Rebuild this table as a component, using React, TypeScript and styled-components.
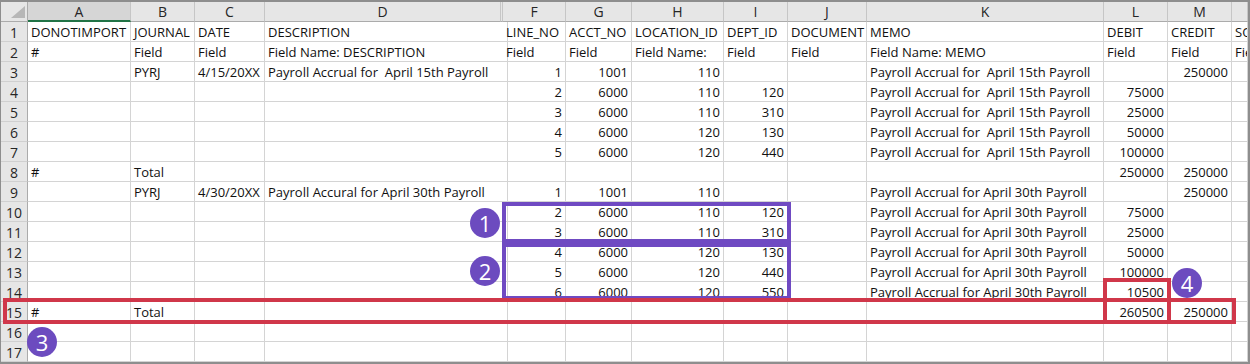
import styled, { createGlobalStyle } from 'styled-components';

type Value = string | number | null;

const GlobalStyle = createGlobalStyle`
  html, body {
    margin: 0;
    padding: 0;
    background: #ffffff;
  }
  body {
    font-family: "Open Sans", "Liberation Sans", sans-serif;
  }
`;

// row header, A, B, C, D, E (hidden), F .. M, then the column cut off at the edge
const COLS = '27px 103px 64px 70px 236px 2px 63px 66px 92px 64px 79px 237px 64px 64px 1fr';
const LETTERS = ['A', 'B', 'C', 'D', '', 'F', 'G', 'H', 'I', 'J', 'K', 'L', 'M', ''];

const MEMO15 = 'Payroll Accrual for  April 15th Payroll';
const MEMO30 = 'Payroll Accrual for April 30th Payroll';

const ROWS: Value[][] = [
  ['DONOTIMPORT', 'JOURNAL', 'DATE', 'DESCRIPTION', null, 'LINE_NO', 'ACCT_NO', 'LOCATION_ID', 'DEPT_ID', 'DOCUMENT', 'MEMO', 'DEBIT', 'CREDIT', 'SOURCE_DOC'],
  ['#', 'Field', 'Field', 'Field Name: DESCRIPTION', null, 'Field', 'Field', 'Field Name:', 'Field', 'Field', 'Field Name: MEMO', 'Field', 'Field', 'Field'],
  [null, 'PYRJ', '4/15/20XX', MEMO15, null, 1, 1001, 110, null, null, MEMO15, null, 250000, null],
  [null, null, null, null, null, 2, 6000, 110, 120, null, MEMO15, 75000, null, null],
  [null, null, null, null, null, 3, 6000, 110, 310, null, MEMO15, 25000, null, null],
  [null, null, null, null, null, 4, 6000, 120, 130, null, MEMO15, 50000, null, null],
  [null, null, null, null, null, 5, 6000, 120, 440, null, MEMO15, 100000, null, null],
  ['#', 'Total', null, null, null, null, null, null, null, null, null, 250000, 250000, null],
  [null, 'PYRJ', '4/30/20XX', 'Payroll Accural for April 30th Payroll', null, 1, 1001, 110, null, null, MEMO30, null, 250000, null],
  [null, null, null, null, null, 2, 6000, 110, 120, null, MEMO30, 75000, null, null],
  [null, null, null, null, null, 3, 6000, 110, 310, null, MEMO30, 25000, null, null],
  [null, null, null, null, null, 4, 6000, 120, 130, null, MEMO30, 50000, null, null],
  [null, null, null, null, null, 5, 6000, 120, 440, null, MEMO30, 100000, null, null],
  [null, null, null, null, null, 6, 6000, 120, 550, null, MEMO30, 10500, null, null],
  ['#', 'Total', null, null, null, null, null, null, null, null, null, 260500, 250000, null],
  [null, null, null, null, null, null, null, null, null, null, null, null, null, null],
  [null, null, null, null, null, null, null, null, null, null, null, null, null, null],
];

const Stage = styled.div`
  position: relative;
  width: 1250px;
  height: 364px;
  overflow: hidden;
`;

const Sheet = styled.div`
  box-sizing: border-box;
  width: 1250px;
  height: 364px;
  border-style: solid;
  border-color: #8e8e8e;
  border-width: 2px 2px 2px 1px;
  overflow: hidden;
  background: #ffffff;
`;

const Row = styled.div`
  display: grid;
  grid-template-columns: ${COLS};
  height: 20px;
`;

const ColHead = styled.div<{ $selected?: boolean }>`
  box-sizing: border-box;
  height: 20px;
  background: ${(p) => (p.$selected ? '#d6d6d6' : '#e6e6e6')};
  border-right: 1px solid #c6c6c6;
  border-bottom: ${(p) => (p.$selected ? '2px solid #217346' : '1px solid #ababab')};
  color: #262626;
  font-size: 14px;
  line-height: 19px;
  text-align: center;
  overflow: hidden;
`;

const Corner = styled.div`
  box-sizing: border-box;
  height: 20px;
  background: #e6e6e6;
  border-right: 1px solid #ababab;
  border-bottom: 1px solid #ababab;
  display: flex;
  align-items: flex-end;
  justify-content: flex-end;
  padding: 0 2px 3px 0;
`;

const RowHead = styled.div`
  box-sizing: border-box;
  height: 20px;
  background: #e6e6e6;
  border-right: 1px solid #ababab;
  border-bottom: 1px solid #d0d0d0;
  color: #262626;
  font-size: 14px;
  line-height: 21px;
  text-align: center;
`;

const Cell = styled.div<{ $num?: boolean; $open?: boolean }>`
  box-sizing: border-box;
  height: 20px;
  border-right: ${(p) => (p.$open ? 'none' : '1px solid #d4d4d4')};
  border-bottom: 1px solid #d4d4d4;
  padding: 0 3px;
  color: #111111;
  font-size: 13px;
  line-height: 21px;
  text-align: ${(p) => (p.$num ? 'right' : 'left')};
  white-space: pre;
  overflow: hidden;
`;

// callout outlines drawn over the grid
const Outline = styled.div<{ $x: number; $y: number; $w: number; $h: number; $color: string }>`
  position: absolute;
  box-sizing: border-box;
  left: ${(p) => p.$x}px;
  top: ${(p) => p.$y}px;
  width: ${(p) => p.$w}px;
  height: ${(p) => p.$h}px;
  border: 4px solid ${(p) => p.$color};
  pointer-events: none;
`;

// numbered callout badges
const Marker = styled.div<{ $cx: number; $cy: number }>`
  position: absolute;
  left: ${(p) => p.$cx - 15}px;
  top: ${(p) => p.$cy - 15}px;
  width: 30px;
  height: 30px;
  border-radius: 50%;
  background: #6c4bbf;
  color: #ffffff;
  font-family: "Open Sans", "Liberation Sans", sans-serif;
  font-size: 22px;
  font-weight: 500;
  display: flex;
  align-items: center;
  justify-content: center;
`;

const PURPLE = '#6f4ac2';
const RED = '#d0374a';

function SelectAll() {
  return (
    <svg width="14" height="12" viewBox="0 0 14 12">
      <polygon points="14,0 14,12 0,12" fill="#b7b7b7" />
    </svg>
  );
}

export default function App() {
  return (
    <>
      <GlobalStyle />
      <Stage>
        <Sheet>
          <Row>
            <Corner>
              <SelectAll />
            </Corner>
            {LETTERS.map((l, i) => (
              <ColHead key={i} $selected={i === 0}>
                {l}
              </ColHead>
            ))}
          </Row>
          {ROWS.map((row, r) => (
            <Row key={r}>
              <RowHead>{r + 1}</RowHead>
              {row.map((v, c) => (
                <Cell key={c} $num={typeof v === 'number'} $open={c === 3}>
                  {v === null ? '' : String(v)}
                </Cell>
              ))}
            </Row>
          ))}
        </Sheet>

        <Outline $x={502} $y={202} $w={289} $h={41} $color={PURPLE} />
        <Outline $x={502} $y={243} $w={289} $h={57} $color={PURPLE} />
        <Outline $x={3} $y={298} $w={1233} $h={26} $color={RED} />
        <Outline $x={1103} $y={278} $w={68} $h={46} $color={RED} />

        <Marker $cx={485} $cy={223}>1</Marker>
        <Marker $cx={485} $cy={271}>2</Marker>
        <Marker $cx={42} $cy={342}>3</Marker>
        <Marker $cx={1187} $cy={283}>4</Marker>
      </Stage>
    </>
  );
}
